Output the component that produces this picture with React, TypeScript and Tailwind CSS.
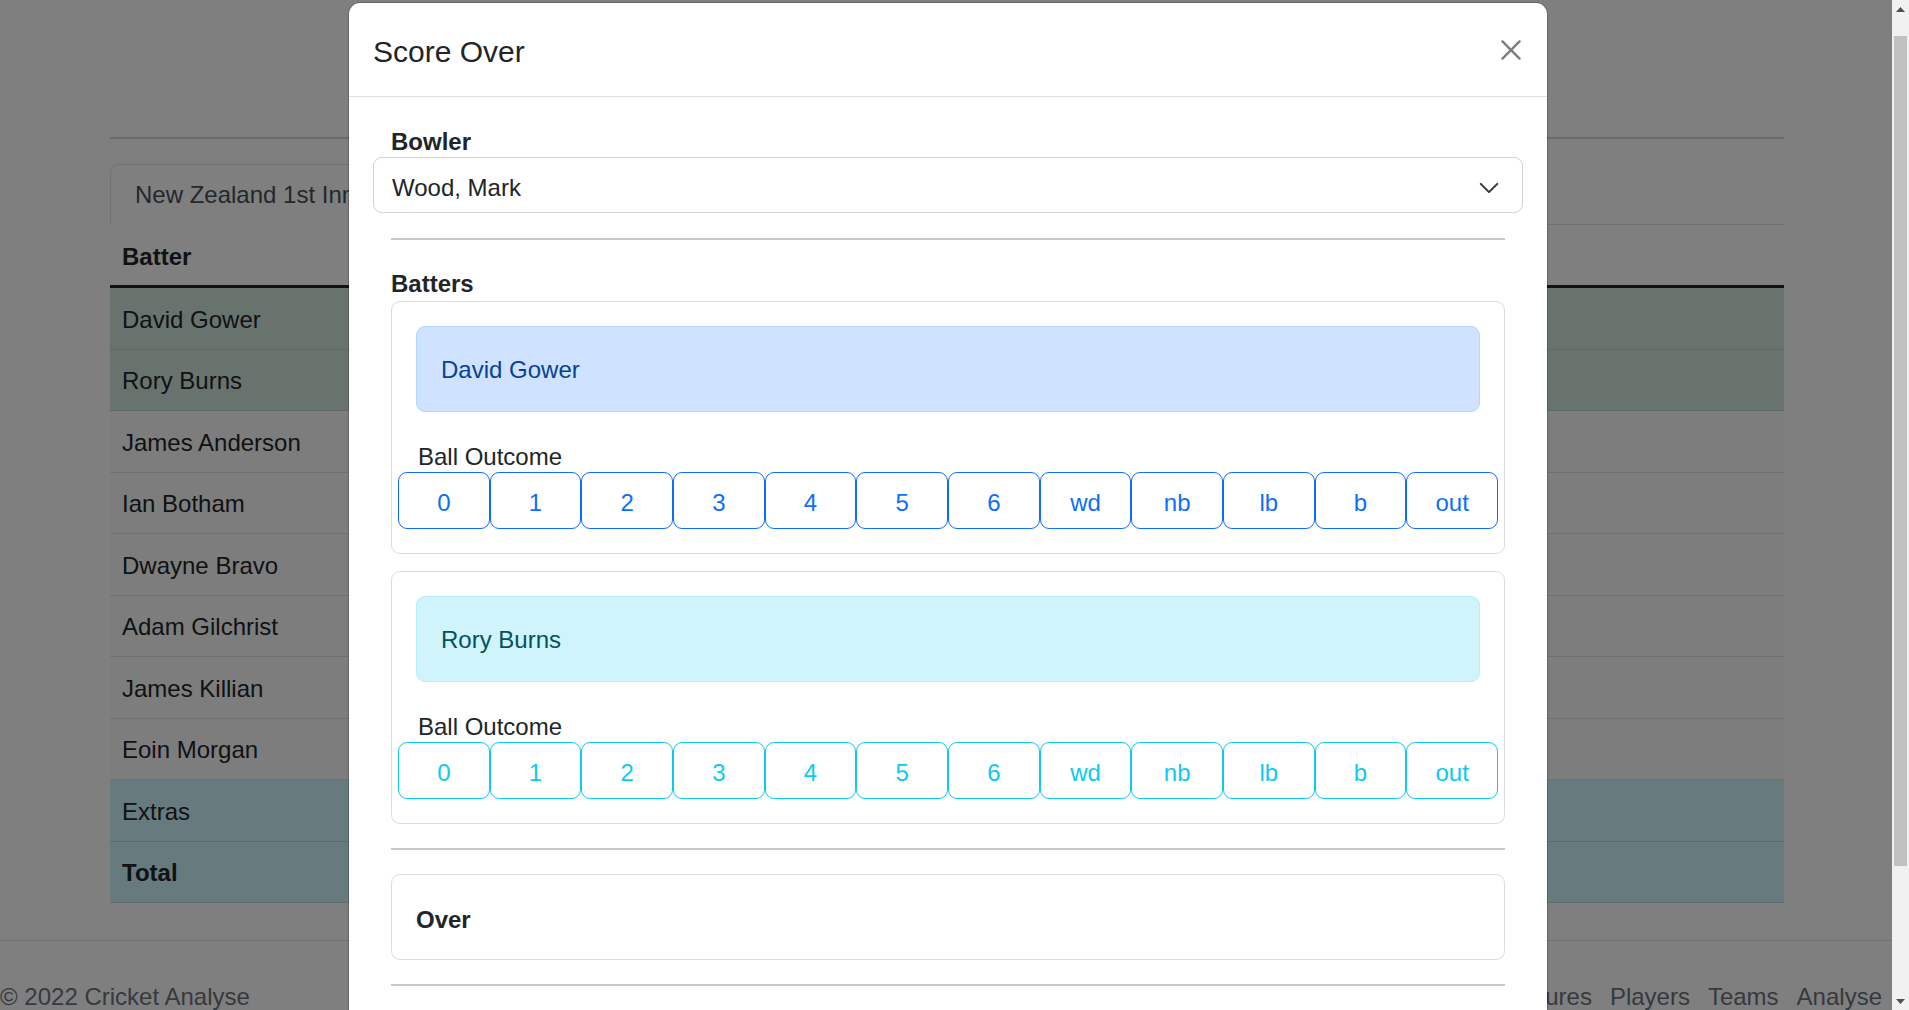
import React from 'react';

type Tone = 'success' | 'plain' | 'info';

const battingRows: { name: string; tone: Tone; bold?: boolean }[] = [
  { name: 'David Gower', tone: 'success' },
  { name: 'Rory Burns', tone: 'success' },
  { name: 'James Anderson', tone: 'plain' },
  { name: 'Ian Botham', tone: 'plain' },
  { name: 'Dwayne Bravo', tone: 'plain' },
  { name: 'Adam Gilchrist', tone: 'plain' },
  { name: 'James Killian', tone: 'plain' },
  { name: 'Eoin Morgan', tone: 'plain' },
  { name: 'Extras', tone: 'info' },
  { name: 'Total', tone: 'info', bold: true },
];

const toneClass: Record<Tone, string> = {
  success: 'bg-[#d1e7dd] border-[#bdd0c8]',
  plain: 'bg-[#fbfbfb] border-[#dee2e6]',
  info: 'bg-[#cff4fc] border-[#bdd6dc]',
};

const outcomes = ['0', '1', '2', '3', '4', '5', '6', 'wd', 'nb', 'lb', 'b', 'out'];

function BatterCard({ name, variant }: { name: string; variant: 'primary' | 'info' }) {
  const alert =
    variant === 'primary'
      ? 'bg-[#cfe2ff] border-[#b6d4fe] text-[#084298]'
      : 'bg-[#cff4fc] border-[#b6effb] text-[#055160]';
  const btn =
    variant === 'primary'
      ? 'border-[#0d6efd] text-[#0d6efd]'
      : 'border-[#0dcaf0] text-[#0dcaf0]';

  return (
    <div className="rounded-[9px] border border-[#dcdcdc] p-[24px]">
      <div className={`rounded-[9px] border px-[24px] pb-[23px] pt-[25px] ${alert}`}>{name}</div>
      <div className="mt-[24px] pl-[2px] pt-[5px] leading-[31px]">Ball Outcome</div>
      <div className="-mx-[18px] grid grid-cols-12">
        {outcomes.map((o) => (
          <div
            key={o}
            className={`flex h-[57px] items-center justify-center rounded-[9px] border pt-[5px] ${btn}`}
          >
            {o}
          </div>
        ))}
      </div>
    </div>
  );
}

export default function App() {
  return (
    <div className="flex h-[1010px] w-[1909px] overflow-hidden bg-white font-['Liberation_Sans',Arial,sans-serif] text-[24px] leading-[36px] text-[#212529]">
      <div className="relative w-[1892px] shrink-0">
        {/* Page behind the modal */}
        <div className="pt-[137px]">
          <div className="mx-[110px] w-[1674px]">
            <div className="h-[2px] bg-[#d4d4d4]" />
            <div className="mt-[25px] flex">
              <div className="whitespace-nowrap rounded-t-[9px] border border-b-0 border-[#dee2e6] px-[24px] py-[12px] text-[#495057]">
                New Zealand 1st Innings
              </div>
              <div className="flex-1 border-b border-[#dee2e6]" />
            </div>
            <div className="border-b-[3px] border-[#222] px-[12px] pb-[10px] pt-[14px] font-bold">
              Batter
            </div>
            {battingRows.map((r) => (
              <div
                key={r.name}
                className={`flex h-[61.5px] items-center border-b px-[12px] pt-[3px] ${toneClass[r.tone]} ${
                  r.bold ? 'font-bold' : ''
                }`}
              >
                {r.name}
              </div>
            ))}
          </div>
          <footer className="mt-[37px] flex justify-between border-t border-[#dee2e6] pr-[10px] pt-[38px] text-[#6c757d]">
            <span>© 2022 Cricket Analyse</span>
            <nav className="flex gap-[18px]">
              <span>Fixtures</span>
              <span>Players</span>
              <span>Teams</span>
              <span>Analyse</span>
            </nav>
          </footer>
        </div>

        {/* Backdrop + modal */}
        <div className="absolute inset-0 overflow-hidden bg-black/50">
          <div className="ml-[348px] mt-[2px] w-[1200px] rounded-[12px] border border-black/20 bg-white bg-clip-padding">
            <div className="flex items-center justify-between border-b border-[#dee2e6] px-[24px] pb-[22px] pt-[26px]">
              <h5 className="text-[30px] font-medium leading-[45px]">Score Over</h5>
              <svg width="24" height="24" viewBox="0 0 16 16" className="-mt-[4px] opacity-50">
                <path
                  d="M.293.293a1 1 0 0 1 1.414 0L8 6.586 14.293.293a1 1 0 1 1 1.414 1.414L9.414 8l6.293 6.293a1 1 0 0 1-1.414 1.414L8 9.414l-6.293 6.293a1 1 0 0 1-1.414-1.414L6.586 8 .293 1.707a1 1 0 0 1 0-1.414z"
                  fill="#000"
                  transform="translate(1.5 1.5) scale(0.8125)"
                />
              </svg>
            </div>

            <div className="p-[24px]">
              <div className="pl-[18px] pt-[5px] font-bold leading-[31px]">Bowler</div>
              <div className="flex h-[56px] items-center justify-between rounded-[9px] border border-[#ced4da] pl-[18px] pr-[22px] pt-[6px]">
                <span>Wood, Mark</span>
                <svg width="22" height="22" viewBox="0 0 16 16" className="-mt-[1px]">
                  <path
                    d="m2 5 6 6 6-6"
                    fill="none"
                    stroke="#343a40"
                    strokeWidth="1.5"
                    strokeLinecap="round"
                    strokeLinejoin="round"
                  />
                </svg>
              </div>

              <div className="px-[18px]">
                <div className="mb-[24px] mt-[25px] h-[2px] bg-[#c8c8c8]" />
                <div className="pt-[3px] font-bold leading-[33px]">Batters</div>
                <div className="mt-[1px]">
                  <BatterCard name="David Gower" variant="primary" />
                </div>
                <div className="mt-[17px]">
                  <BatterCard name="Rory Burns" variant="info" />
                </div>
                <div className="my-[24px] h-[2px] bg-[#c8c8c8]" />
                <div className="rounded-[9px] border border-[#dcdcdc] px-[24px] pb-[21px] pt-[27px] font-bold">
                  Over
                </div>
                <div className="my-[24px] h-[2px] bg-[#c8c8c8]" />
                <div className="h-[200px]" />
              </div>
            </div>
          </div>
        </div>
      </div>

      {/* Scrollbar */}
      <div className="flex w-[17px] shrink-0 flex-col bg-[#f1f1f1]">
        <div className="flex h-[17px] items-center justify-center">
          <svg width="9" height="6" viewBox="0 0 9 6">
            <path d="M0 6 4.5 1 9 6z" fill="#505050" />
          </svg>
        </div>
        <div className="mx-[2px] mt-[19px] h-[830px] bg-[#c1c1c1]" />
        <div className="flex-1" />
        <div className="flex h-[17px] items-center justify-center">
          <svg width="9" height="6" viewBox="0 0 9 6">
            <path d="M0 0 4.5 5 9 0z" fill="#505050" />
          </svg>
        </div>
      </div>
    </div>
  );
}
